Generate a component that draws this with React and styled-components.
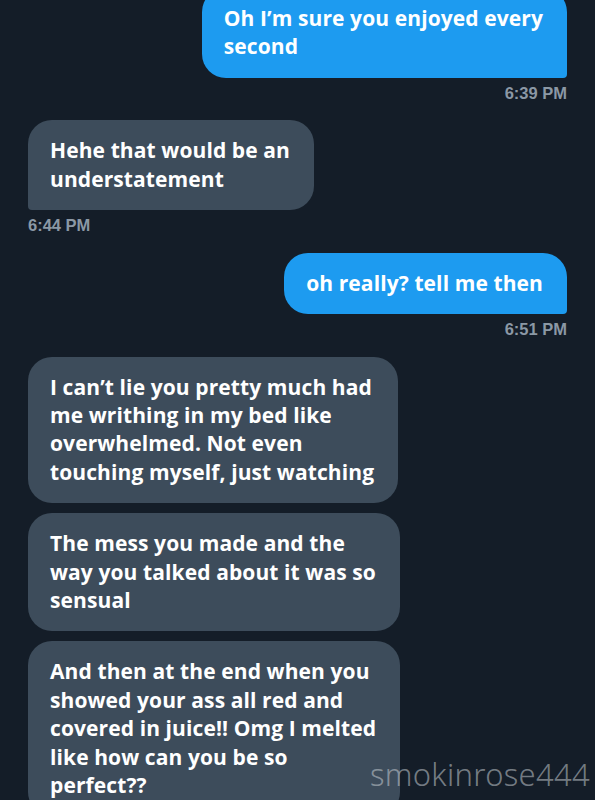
import { createGlobalStyle, styled } from "styled-components"

const Global = createGlobalStyle`
    html, body {
        margin: 0;
        padding: 0;
        background-color: #141d28;
    }
`

const Screen = styled.div`
    width: 595px;
    height: 800px;
    overflow: hidden;
    position: relative;
    background-color: #141d28;
    box-sizing: border-box;
    padding: 0px 28px;
    font-family: "Open Sans", "Noto Sans", sans-serif;
`

const Thread = styled.div`
    display: flex;
    flex-direction: column;
    margin-top: -12px;
    gap: 17.5px;
`

const Group = styled.div`
    display: flex;
    flex-direction: column;
    align-items: ${p => (p.$mine ? "flex-end" : "flex-start")};
    gap: 10px;
`

const Bubble = styled.div`
    box-sizing: border-box;
    padding: 16px 24px 17px 22px;
    font-size: 21px;
    font-weight: 700;
    line-height: 28.4px;
    letter-spacing: 0.1px;
    color: #ffffff;
    background-color: ${p => (p.$mine ? "#1d9bf0" : "#3d4c5b")};
    border-radius: 24px;
    ${p => p.$tail && (p.$mine ? "border-bottom-right-radius: 4px;" : "border-bottom-left-radius: 4px;")}
`

const Time = styled.div`
    font-family: "Liberation Sans", Arial, sans-serif;
    font-size: 16.5px;
    font-weight: 700;
    line-height: 20px;
    color: #8b98a5;
    margin-top: -5px;
`

const Watermark = styled.div`
    position: absolute;
    right: 5px;
    bottom: 5px;
    font-family: "Noto Sans", "DejaVu Sans", sans-serif;
    font-weight: 300;
    font-size: 31px;
    letter-spacing: 0.3px;
    color: rgba(200, 205, 210, 0.55);
`

const groups = [
    { mine: true, time: "6:39 PM", msgs: [["Oh I’m sure you enjoyed every", "second"]] },
    { mine: false, time: "6:44 PM", msgs: [["Hehe that would be an", "understatement"]] },
    { mine: true, time: "6:51 PM", msgs: [["oh really? tell me then"]] },
    {
        mine: false,
        msgs: [
            ["I can’t lie you pretty much had", "me writhing in my bed like", "overwhelmed. Not even", "touching myself, just watching"],
            ["The mess you made and the", "way you talked about it was so", "sensual"],
            ["And then at the end when you", "showed your ass all red and", "covered in juice!! Omg I melted", "like how can you be so", "perfect??"],
        ],
    },
]

export default function App() {
    return (
        <>
            <Global />
            <Screen>
                <Thread>
                    {groups.map((g, i) => (
                        <Group key={i} $mine={g.mine}>
                            {g.msgs.map((lines, j) => (
                                <Bubble key={j} $mine={g.mine} $tail={g.time && j === g.msgs.length - 1}>
                                    {lines.map((l, k) => (
                                        <div key={k}>{l}</div>
                                    ))}
                                </Bubble>
                            ))}
                            {g.time && <Time>{g.time}</Time>}
                        </Group>
                    ))}
                </Thread>
                <Watermark>smokinrose444</Watermark>
            </Screen>
        </>
    )
}
